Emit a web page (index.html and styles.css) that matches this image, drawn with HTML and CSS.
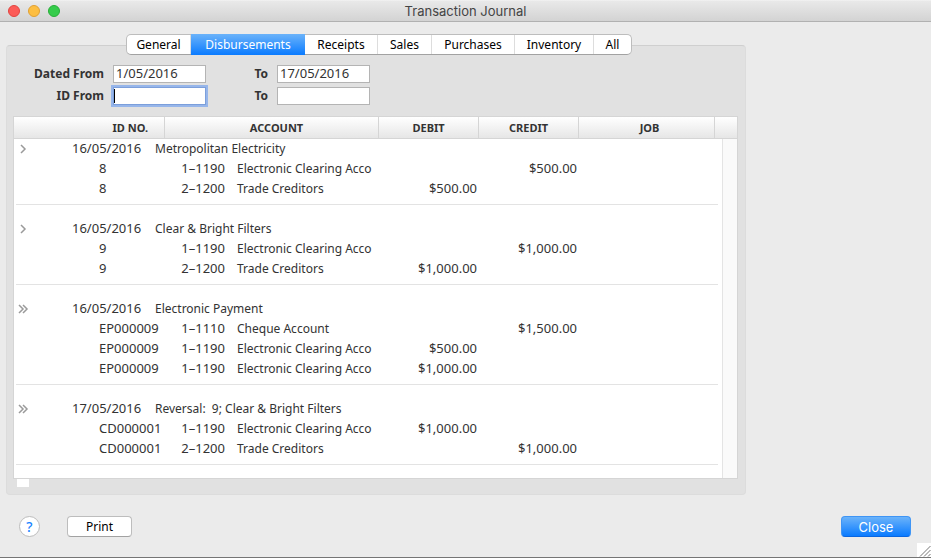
FILE: index.html
```
<!DOCTYPE html>
<html lang="en">
<head>
    <meta charset="UTF-8">
    <meta name="viewport" content="width=device-width, initial-scale=1.0">
    <title>Transaction Journal</title>
    <link rel="stylesheet" href="styles.css">
</head>
<body>
    <header class="titlebar">
        <div class="lights">
            <button class="light red" aria-label="Close window"></button>
            <button class="light yellow" aria-label="Minimise"></button>
            <button class="light green" aria-label="Zoom"></button>
        </div>
        <h1 class="title">Transaction Journal</h1>
    </header>

    <main class="content">
        <nav class="tabs">
            <button class="tab">General</button>
            <button class="tab selected">Disbursements</button>
            <button class="tab">Receipts</button>
            <button class="tab">Sales</button>
            <button class="tab">Purchases</button>
            <button class="tab">Inventory</button>
            <button class="tab">All</button>
        </nav>

        <section class="panel">
            <form class="filters">
                <label for="dateFrom">Dated From</label>
                <input type="text" id="dateFrom" value="1/05/2016">
                <label for="dateTo">To</label>
                <input type="text" id="dateTo" value="17/05/2016">
                <label for="idFrom">ID From</label>
                <input type="text" id="idFrom" class="active">
                <label for="idTo">To</label>
                <input type="text" id="idTo">
            </form>

            <div class="journal">
                <table>
                    <colgroup>
                        <col class="c-arrow">
                        <col class="c-date">
                        <col class="c-id">
                        <col class="c-gap">
                        <col class="c-code">
                        <col class="c-name">
                        <col class="c-amount">
                        <col class="c-amount">
                        <col class="c-job">
                        <col class="c-end">
                    </colgroup>
                    <thead>
                        <tr>
                            <th colspan="4" class="th-id">ID No.</th>
                            <th colspan="2" class="th-account">Account</th>
                            <th>Debit</th>
                            <th>Credit</th>
                            <th class="th-job">Job</th>
                            <th></th>
                        </tr>
                    </thead>
                    <tbody>
                        <tr>
                            <td class="arrow"><svg width="12" height="10" viewBox="0 0 12 10"><path d="M4 1l4 4-4 4"/></svg></td>
                            <td colspan="2" class="num">16/05/2016</td>
                            <td colspan="7">Metropolitan Electricity</td>
                        </tr>
                        <tr>
                            <td colspan="2"></td><td colspan="2" class="num">8</td><td class="num code">1–1190</td><td class="name">Electronic Clearing Acco</td>
                            <td></td><td class="num amount">$500.00</td><td></td><td></td>
                        </tr>
                        <tr>
                            <td colspan="2"></td><td colspan="2" class="num">8</td><td class="num code">2–1200</td><td class="name">Trade Creditors</td>
                            <td class="num amount">$500.00</td><td></td><td></td><td></td>
                        </tr>
                        <tr class="rule"><td colspan="10"></td></tr>
                    </tbody>
                    <tbody>
                        <tr>
                            <td class="arrow"><svg width="12" height="10" viewBox="0 0 12 10"><path d="M4 1l4 4-4 4"/></svg></td>
                            <td colspan="2" class="num">16/05/2016</td>
                            <td colspan="7">Clear &amp; Bright Filters</td>
                        </tr>
                        <tr>
                            <td colspan="2"></td><td colspan="2" class="num">9</td><td class="num code">1–1190</td><td class="name">Electronic Clearing Acco</td>
                            <td></td><td class="num amount">$1,000.00</td><td></td><td></td>
                        </tr>
                        <tr>
                            <td colspan="2"></td><td colspan="2" class="num">9</td><td class="num code">2–1200</td><td class="name">Trade Creditors</td>
                            <td class="num amount">$1,000.00</td><td></td><td></td><td></td>
                        </tr>
                        <tr class="rule"><td colspan="10"></td></tr>
                    </tbody>
                    <tbody>
                        <tr>
                            <td class="arrow"><svg width="12" height="10" viewBox="0 0 12 10"><path d="M2 1l4 4-4 4M6 1l4 4-4 4"/></svg></td>
                            <td colspan="2" class="num">16/05/2016</td>
                            <td colspan="7">Electronic Payment</td>
                        </tr>
                        <tr>
                            <td colspan="2"></td><td colspan="2" class="num">EP000009</td><td class="num code">1–1110</td><td class="name">Cheque Account</td>
                            <td></td><td class="num amount">$1,500.00</td><td></td><td></td>
                        </tr>
                        <tr>
                            <td colspan="2"></td><td colspan="2" class="num">EP000009</td><td class="num code">1–1190</td><td class="name">Electronic Clearing Acco</td>
                            <td class="num amount">$500.00</td><td></td><td></td><td></td>
                        </tr>
                        <tr>
                            <td colspan="2"></td><td colspan="2" class="num">EP000009</td><td class="num code">1–1190</td><td class="name">Electronic Clearing Acco</td>
                            <td class="num amount">$1,000.00</td><td></td><td></td><td></td>
                        </tr>
                        <tr class="rule"><td colspan="10"></td></tr>
                    </tbody>
                    <tbody>
                        <tr>
                            <td class="arrow"><svg width="12" height="10" viewBox="0 0 12 10"><path d="M2 1l4 4-4 4M6 1l4 4-4 4"/></svg></td>
                            <td colspan="2" class="num">17/05/2016</td>
                            <td colspan="7">Reversal:&nbsp; 9; Clear &amp; Bright Filters</td>
                        </tr>
                        <tr>
                            <td colspan="2"></td><td colspan="2" class="num">CD000001</td><td class="num code">1–1190</td><td class="name">Electronic Clearing Acco</td>
                            <td class="num amount">$1,000.00</td><td></td><td></td><td></td>
                        </tr>
                        <tr>
                            <td colspan="2"></td><td colspan="2" class="num">CD000001</td><td class="num code">2–1200</td><td class="name">Trade Creditors</td>
                            <td></td><td class="num amount">$1,000.00</td><td></td><td></td>
                        </tr>
                        <tr class="rule last"><td colspan="10"></td></tr>
                    </tbody>
                </table>
            </div>
            <div class="stub"></div>
        </section>
    </main>

    <footer class="actions">
        <button class="help" aria-label="Help">?</button>
        <button class="btn">Print</button>
        <button class="btn primary">Close</button>
    </footer>

    <svg class="grip" width="14" height="14" viewBox="0 0 14 14"><path d="M3 13.500L13.500 3M7 13.500L13.500 7M11 13.500L13.500 11"/></svg>
</body>
</html>
```

FILE: styles.css
```
* {
    box-sizing: border-box;
}
body {
    margin: 0;
    min-height: 100vh;
    display: flex;
    flex-direction: column;
    position: relative;
    background-color: #ebebeb;
    border-bottom: 1px solid #757575;
    font-family: "Noto Sans", "Open Sans", sans-serif;
    font-size: 12px;
    color: #333;
}
button,
input {
    font-family: inherit;
    font-size: inherit;
    margin: 0;
    padding: 0;
}

/* title bar */
.titlebar {
    display: grid;
    grid-template-columns: 1fr auto 1fr;
    align-items: center;
    height: 22px;
    padding: 0 8px;
    background: linear-gradient(#f6f6f6, #e9e9e9 1px, #d3d3d3);
    border-bottom: 1px solid #b1b1b1;
}
.lights {
    display: flex;
    gap: 8px;
}
.light {
    width: 12px;
    height: 12px;
    border-radius: 50%;
    border: 1px solid;
}
.red {
    background-color: #fc5b57;
    border-color: #e2443f;
}
.yellow {
    background-color: #fdbe41;
    border-color: #e0a033;
}
.green {
    background-color: #35cc4b;
    border-color: #27ae38;
}
.title {
    margin: 0;
    font-family: Inter, sans-serif;
    font-size: 13px;
    font-weight: normal;
    color: #444;
}

/* tabs sit over the top edge of the panel */
.content {
    padding: 12px 6px 0;
    max-width: 752px;
}
.tabs {
    display: grid;
    grid-template-columns: 64px 114px 73px 54px 83px 79px 37px;
    width: max-content;
    margin: 0 0 -10px 120px;
    position: relative;
    border: 1px solid #bdbdbd;
    border-bottom-color: #a2a2a2;
    border-radius: 5px;
    background-color: #fff;
}
.tab {
    height: 19px;
    padding-bottom: 1px;
    border: 0;
    border-right: 1px solid #ddd;
    background: none;
    color: #000;
}
.tab:last-child {
    border-right: 0;
}
.tab.selected {
    height: 21px;
    margin: -1px 0;
    border: 0;
    background: linear-gradient(#6bb3fa, #0a7bff);
    color: #fff;
}
.panel {
    padding: 19px 7px 7px 6px;
    background-color: #e1e1e1;
    border: 1px solid #dcdcdc;
    border-top-color: #cfcfcf;
    border-radius: 4px;
}

.filters {
    display: grid;
    grid-template-columns: 91px 93px 53px 93px;
    grid-auto-rows: 18px;
    gap: 4px 9px;
    align-items: center;
}
.filters label {
    text-align: right;
    line-height: 18px;
    font-weight: bold;
}
.filters input {
    width: 100%;
    height: 18px;
    padding: 0 2px 2px;
    border: 1px solid #b4b4b4;
    background-color: #fff;
    color: #333;
    font-size: 13px;
    outline: 0;
}
.filters .active {
    border-color: #7c9fdb;
    box-shadow: 0 0 0 2px #97b6ea;
    background: linear-gradient(#000, #000) 0 1px / 1px 14px no-repeat #fff;
}

/* journal list, with the empty scroll track on the right */
.journal {
    margin-top: 11px;
    border: 1px solid #d5d5d5;
    background: linear-gradient(to left, #fafafa 14px, #e4e4e4 14px, #e4e4e4 15px, #fff 15px);
}
table {
    width: 100%;
    table-layout: fixed;
    border-collapse: separate;
    border-spacing: 0;
}
.c-arrow { width: 58px; }
.c-date { width: 27px; }
.c-id { width: 56px; }
.c-gap { width: 10px; }
.c-code { width: 60px; }
.c-name { width: 154px; }
.c-amount { width: 100px; }
.c-end { width: 22px; }
th {
    height: 22px;
    padding: 0 0 1px;
    background: linear-gradient(#fff, #e6e6e6);
    border-right: 1px solid #d5d5d5;
    border-bottom: 1px solid #d5d5d5;
    font-size: 11px;
    line-height: 19px;
    text-transform: uppercase;
}
th:last-child {
    border-right: 0;
}
.th-id {
    text-align: right;
    padding-right: 16px;
}
.th-account {
    padding-left: 10px;
}
.th-job {
    padding-left: 6px;
}
td {
    height: 20px;
    padding: 0;
    line-height: 20px;
    white-space: nowrap;
}
.num {
    padding-bottom: 1px;
    font-size: 13px;
    line-height: 19px;
}
.arrow {
    padding-left: 3px;
}
.arrow svg {
    display: block;
    fill: none;
    stroke: #9a9a9a;
    stroke-width: 1.5;
}
.code,
.amount {
    text-align: right;
}
.amount {
    padding-right: 2px;
}
.name {
    padding-left: 12px;
    overflow: hidden;
}
.rule td {
    padding: 5px 19px 14px 2px;
    line-height: 1px;
}
.rule td::before {
    content: "";
    display: block;
    height: 1px;
    background-color: #e3e3e3;
}
.rule.last td {
    height: 19px;
    padding-bottom: 13px;
}
.stub {
    width: 12px;
    height: 8px;
    margin-left: 4px;
    background-color: #fff;
}

/* bottom buttons */
.actions {
    display: flex;
    align-items: center;
    padding: 21px 20px 0 19px;
}
.help {
    width: 21px;
    height: 21px;
    margin-right: 27px;
    border: 1px solid #bdbdbd;
    border-radius: 50%;
    background-color: #fff;
    color: #1a84ff;
    font-size: 14px;
    font-weight: 500;
    line-height: 19px;
}
.btn {
    width: 65px;
    height: 21px;
    border: 1px solid #bdbdbd;
    border-bottom-color: #a2a2a2;
    border-radius: 4px;
    background-color: #fff;
    color: #000;
}
.primary {
    width: 70px;
    margin-left: auto;
    border-color: #3f95f5;
    border-bottom-color: #0a66e0;
    background: linear-gradient(#6bb3fa, #0a7bff);
    color: #fff;
    font-family: Inter, sans-serif;
    font-size: 13px;
}
.grip {
    position: absolute;
    right: 0;
    bottom: 0;
    background-color: #fff;
    fill: none;
    stroke: #777;
}
```
